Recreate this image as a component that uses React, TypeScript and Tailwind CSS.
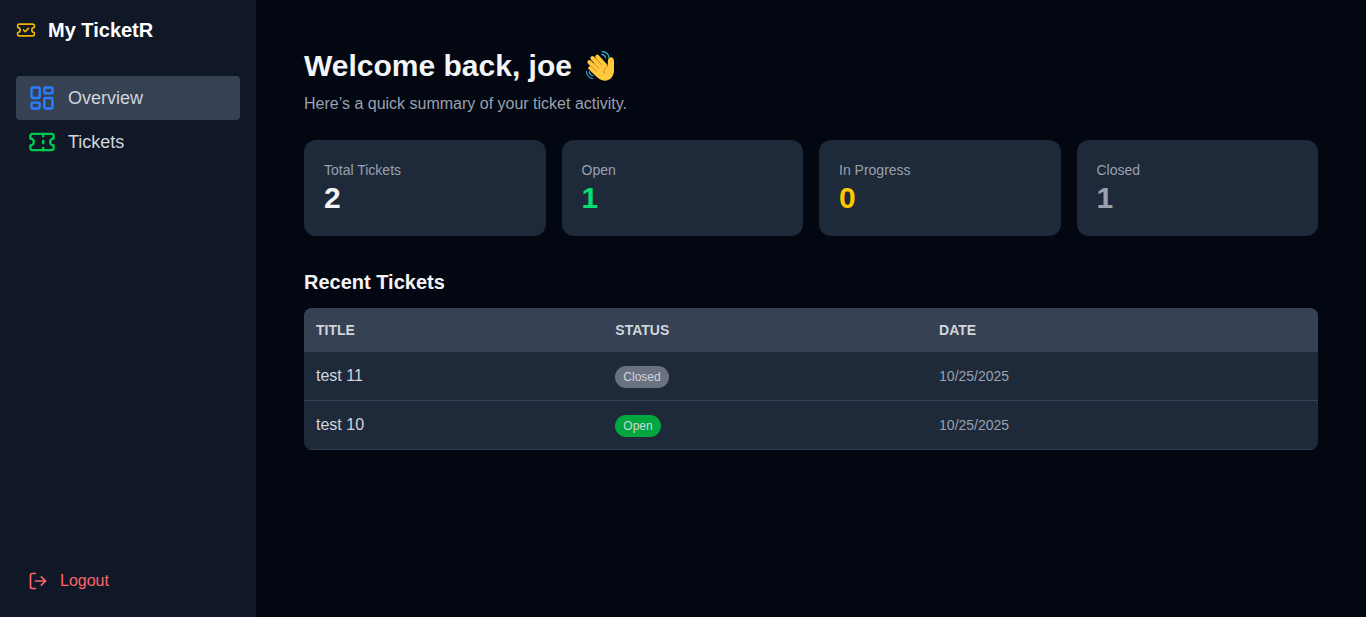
import { LayoutDashboard, LogOut, Ticket, TicketCheck } from "lucide-react";

type Status = "Open" | "In Progress" | "Closed";

interface TicketRow {
  title: string;
  status: Status;
  date: string;
}

const stats = [
  { label: "Total Tickets", value: 2, color: "text-gray-100" },
  { label: "Open", value: 1, color: "text-green-400" },
  { label: "In Progress", value: 0, color: "text-[#fcc800]" },
  { label: "Closed", value: 1, color: "text-gray-400" },
];

const tickets: TicketRow[] = [
  { title: "test 11", status: "Closed", date: "10/25/2025" },
  { title: "test 10", status: "Open", date: "10/25/2025" },
];

const badge: Record<Status, string> = {
  Open: "bg-green-600",
  "In Progress": "bg-yellow-500",
  Closed: "bg-gray-500",
};

function WavingHand() {
  return (
    <svg viewBox="0 0 32 32" className="size-8" role="img" aria-label="Waving hand" fill="none" strokeLinecap="round">
      <g stroke="#ffc83d" strokeWidth="4">
        <path d="M13.2 6.6 21 15" />
        <path d="M8.4 8 18 18" />
        <path d="M5.4 12.2 15 21" />
        <path d="M6.2 18 14 24.5" />
      </g>
      <path
        d="M14.5 8.5 23 16.2c.9-1.2.8-3 .9-5.4.1-2.300 1.300-3.700 3.200-3.600 2 .1 2.900 1.700 2.900 3.900V20c0 6-3.400 10.700-9.200 10.700-3.800 0-6.400-2-9-4.700L7 21.500l1-6z"
        fill="#ffc83d"
      />
      <g stroke="#d68f22" strokeWidth="1">
        <path d="M10.600 7.500 17.500 14.500" />
        <path d="M7 10.700 15 18.200" />
        <path d="M5.800 15.400 12.500 21.200" />
        <path d="M23.400 16.300c-2.400 1.300-3.900 3.700-3.200 6.900" />
      </g>
      <g stroke="#38b6dc" strokeWidth="1.100">
        <path d="M18.200 1.600c3.600.2 6.400 2.700 6.800 6" />
        <path d="M17.800 4.400c2 .3 3.500 1.700 3.900 3.600" />
        <path d="M2.500 21.600c.1 3.600 2.500 6.500 6 6.900" />
        <path d="M5.300 21.600c.1 2 1.500 3.700 3.700 4.100" />
      </g>
    </svg>
  );
}

function Sidebar() {
  return (
    <aside className="flex w-64 shrink-0 flex-col justify-between bg-gray-900 p-4 text-gray-300">
      <div>
        <div className="mb-8 flex items-center gap-3">
          <TicketCheck className="size-5 text-yellow-500" />
          <span className="text-xl font-bold text-white">My TicketR</span>
        </div>
        <nav className="flex flex-col text-lg">
          <a href="#overview" className="flex items-center gap-3 rounded bg-gray-700 px-3 py-2">
            <LayoutDashboard className="size-7 text-blue-500" />
            Overview
          </a>
          <a href="#tickets" className="flex items-center gap-3 rounded px-3 py-2">
            <Ticket className="size-7 text-green-500" />
            Tickets
          </a>
        </nav>
      </div>
      <button type="button" className="flex items-center gap-3 rounded px-3 py-2 text-red-400">
        <LogOut className="size-5" />
        Logout
      </button>
    </aside>
  );
}

export default function App() {
  return (
    <div className="flex min-h-screen bg-gray-950 font-['Liberation_Sans',Arial,sans-serif] text-gray-100">
      <Sidebar />
      <main className="flex-1 px-12 py-12">
        <h1 className="flex items-center gap-3 text-3xl font-bold">
          Welcome back, joe
          <WavingHand />
        </h1>
        <p className="mt-2 text-gray-400">Here’s a quick summary of your ticket activity.</p>

        <section className="mt-6 grid grid-cols-4 gap-4">
          {stats.map((s) => (
            <div key={s.label} className="rounded-xl bg-gray-800 p-5">
              <p className="text-sm text-gray-400">{s.label}</p>
              <p className={`text-3xl font-bold ${s.color}`}>{s.value}</p>
            </div>
          ))}
        </section>

        <section className="mt-8">
          <h2 className="mb-3 text-xl font-semibold">Recent Tickets</h2>
          <div className="overflow-hidden rounded-lg bg-gray-800">
            <table className="w-full text-left text-gray-300">
              <thead className="bg-gray-700 text-sm uppercase">
                <tr>
                  <th className="p-3">Title</th>
                  <th className="p-3">Status</th>
                  <th className="p-3">Date</th>
                </tr>
              </thead>
              <tbody>
                {tickets.map((t) => (
                  <tr key={t.title} className="border-b border-gray-700">
                    <td className="p-3">{t.title}</td>
                    <td className="p-3">
                      <span className={`rounded-full px-2 py-1 text-xs ${badge[t.status]}`}>{t.status}</span>
                    </td>
                    <td className="p-3 text-sm text-gray-400">{t.date}</td>
                  </tr>
                ))}
              </tbody>
            </table>
          </div>
        </section>
      </main>
    </div>
  );
}
